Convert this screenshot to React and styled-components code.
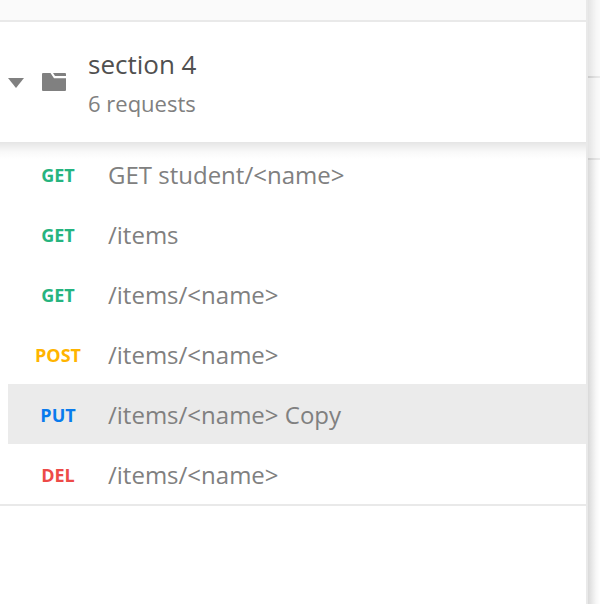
import React from "react";
import styled, { createGlobalStyle } from "styled-components";

const Global = createGlobalStyle`
  body { margin: 0; background: #fff; font-family: "Open Sans", sans-serif; overflow: hidden; }
  * { box-sizing: border-box; }
`;
const Page = styled.div`display: flex; width: 600px; height: 604px; background: #fff;`;
const Sidebar = styled.aside`
  width: 588px; height: 604px; border-right: 2px solid #e9e9e9; background: #fff;
`;
const TopStrip = styled.div`height: 22px; background: #fafafa; border-bottom: 2px solid #e9e9e9;`;
const Header = styled.header`height: 120px; display: flex; background: #fff;`;
const Caret = styled.svg`width: 16px; height: 10px; margin: 56px 0 0 8px;`;
const Folder = styled.svg`width: 24px; height: 18px; margin: 51px 0 0 18px;`;
const Titles = styled.div`margin-left: 22px; padding-top: 24px;`;
const Title = styled.div`font-size: 26px; line-height: 36px; color: #505050;`;
const Subtitle = styled.div`font-size: 22px; line-height: 30px; margin-top: 6px; color: #808080;`;
const List = styled.div`
  padding: 2px 0 0 8px; height: 364px; border-bottom: 2px solid #e9e9e9;
  background: linear-gradient(#e5e5e5, #efefef 5px, #f9f9f9 10px, #fff 17px) no-repeat;
`;
const Row = styled.div`
  height: 60px; display: flex; align-items: center;
  background: ${(p) => (p.$active ? "#ebebeb" : "transparent")};
`;
const Method = styled.span`
  width: 100px; padding-top: 2px; text-align: center; font-size: 18px; line-height: 24px; font-weight: 700;
  color: ${(p) => p.$color};
`;
const Name = styled.span`font-size: 24px; color: #808080; white-space: pre;`;
const Side = styled.div`
  width: 12px;
  background: linear-gradient(90deg, rgba(0,0,0,.15), rgba(0,0,0,.09) 4px, rgba(0,0,0,.03) 8px, transparent 12px);
`;
const SidePanel = styled.div`
  height: ${(p) => p.$height}px;
  background: rgba(245,245,245,.4) padding-box;
  border-bottom: 2px solid rgba(0,0,0,.08);
`;

const requests = [
  ["GET", "#26b47f", "GET student/<name>"],
  ["GET", "#26b47f", "/items"],
  ["GET", "#26b47f", "/items/<name>"],
  ["POST", "#ffb400", "/items/<name>"],
  ["PUT", "#097bed", "/items/<name> Copy"],
  ["DEL", "#ed4b48", "/items/<name>"],
];

export default function App() {
  return (
    <Page>
      <Global />
      <Sidebar>
        <TopStrip />
        <Header>
          <Caret viewBox="0 0 16 10"><path d="M0 0H16L8 10Z" fill="#808080" /></Caret>
          <Folder viewBox="0 0 24 18" fill="#808080">
            <path d="M1 0H8.5L12 5.3H24V17Q24 18 23 18H1Q0 18 0 17V1Q0 0 1 0Z" />
            <path d="M11 0H23Q24 0 24 1V3H13Z" />
          </Folder>
          <Titles>
            <Title>section 4</Title>
            <Subtitle>6 requests</Subtitle>
          </Titles>
        </Header>
        <List>
          {requests.map(([m, c, n], i) => (
            <Row key={i} $active={i === 4}><Method $color={c}>{m}</Method><Name>{n}</Name></Row>
          ))}
        </List>
      </Sidebar>
      <Side>
        <SidePanel $height={78} />
        <SidePanel $height={82} />
      </Side>
    </Page>
  );
}
